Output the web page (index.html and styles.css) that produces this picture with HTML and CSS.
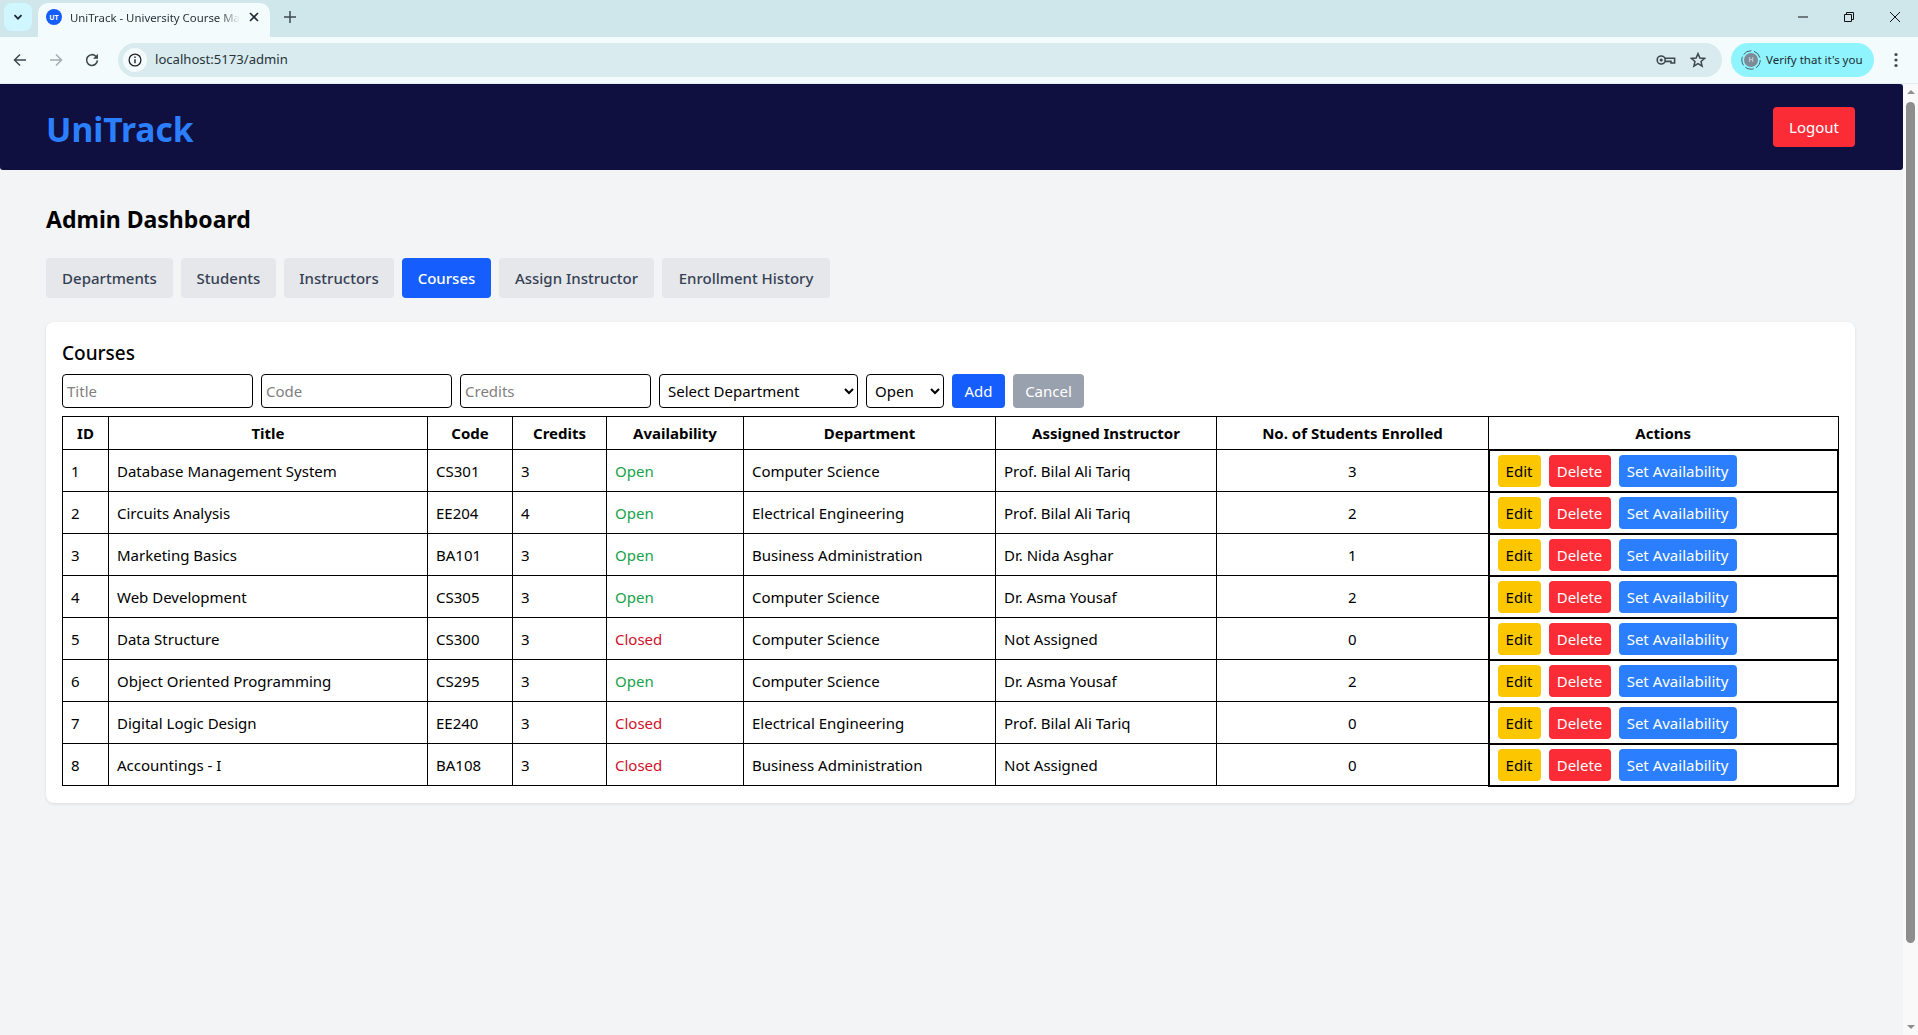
FILE: index.html
```html
<!DOCTYPE html>
<html lang="en">
<head>
    <meta charset="UTF-8">
    <meta name="viewport" content="width=device-width, initial-scale=1.0">
    <title>UniTrack - University Course Management</title>
    <link rel="stylesheet" href="styles.css">
</head>
<body>
<div class="browser-tabs">
    <div class="tab-search">
        <svg width="12" height="12" viewBox="0 0 12 12"><path d="M2.5 4.2 6 7.7l3.5-3.5" fill="none" stroke="#1c2b33" stroke-width="1.8"/></svg>
    </div>
    <div class="tab">
        <span class="favicon">UT</span>
        <span class="tab-title">UniTrack - University Course Ma</span>
        <svg class="tab-close" width="12" height="12" viewBox="0 0 12 12"><path d="M2 2l8 8M10 2l-8 8" stroke="#1f2a30" stroke-width="1.6"/></svg>
    </div>
    <svg class="new-tab" width="14" height="14" viewBox="0 0 14 14"><path d="M7 1v12M1 7h12" stroke="#3c4a50" stroke-width="1.5"/></svg>
    <div class="window-controls">
        <svg width="12" height="12" viewBox="0 0 12 12"><path d="M1 6h10" stroke="#111" stroke-width="1"/></svg>
        <svg width="12" height="12" viewBox="0 0 12 12"><path d="M1.5 3.5h7v7h-7zM3.5 3.5v-2h7v7h-2" fill="none" stroke="#111" stroke-width="1"/></svg>
        <svg width="12" height="12" viewBox="0 0 12 12"><path d="M1 1l10 10M11 1L1 11" stroke="#111" stroke-width="1"/></svg>
    </div>
</div>

<div class="browser-toolbar">
    <svg class="nav-icon" width="16" height="16" viewBox="0 0 16 16"><path d="M14 8H2.5M8 2.5 2.5 8 8 13.5" fill="none" stroke="#3c4a50" stroke-width="1.5"/></svg>
    <svg class="nav-icon" width="16" height="16" viewBox="0 0 16 16"><path d="M2 8h11.5M8 2.5 13.5 8 8 13.5" fill="none" stroke="#a3aeb2" stroke-width="1.5"/></svg>
    <svg class="nav-icon" width="16" height="16" viewBox="0 0 16 16"><path d="M13.4 8.4a5.4 5.4 0 1 1-1.6-4.2L13.4 6" fill="none" stroke="#3c4a50" stroke-width="1.6"/><path d="M14 1.8v5H9z" fill="#3c4a50"/></svg>
    <div class="omnibox">
        <span class="site-info">
            <svg width="14" height="14" viewBox="0 0 14 14"><circle cx="7" cy="7" r="5.9" fill="none" stroke="#222" stroke-width="1.3"/><path d="M7 6.2v4M7 3.6v1.4" stroke="#222" stroke-width="1.4"/></svg>
        </span>
        <span class="url">localhost:5173/admin</span>
        <svg class="omni-icon" width="20" height="14" viewBox="0 0 20 14"><circle cx="5.2" cy="7" r="4" fill="none" stroke="#3c4a50" stroke-width="1.6"/><circle cx="5.2" cy="7" r="1.6" fill="#3c4a50"/><path d="M9 5.2H18.6V10H15V8.4H9" fill="none" stroke="#3c4a50" stroke-width="1.6"/></svg>
        <svg class="omni-icon" width="16" height="16" viewBox="0 0 16 16"><path d="M8 1.6 9.9 6l4.7.4-3.6 3.1 1.1 4.6L8 11.6l-4.1 2.5L5 9.5 1.4 6.4 6.1 6z" fill="none" stroke="#3c4a50" stroke-width="1.5"/></svg>
    </div>
    <div class="verify-pill">
        <span class="avatar">
            <svg width="20" height="20" viewBox="0 0 20 20"><circle cx="10" cy="10" r="9.2" fill="none" stroke="#47606a" stroke-width="1" stroke-dasharray="9 2.5"/></svg>
            <span class="avatar-letter">H</span>
        </span>
        Verify that it's you
    </div>
    <svg class="menu-dots" width="4" height="16" viewBox="0 0 4 16"><circle cx="2" cy="2.5" r="1.6" fill="#3c4a50"/><circle cx="2" cy="8" r="1.6" fill="#3c4a50"/><circle cx="2" cy="13.5" r="1.6" fill="#3c4a50"/></svg>
</div>

<div class="viewport">
    <div class="page">
        <header class="topbar">
            <div class="logo">UniTrack</div>
            <button class="logout-btn">Logout</button>
        </header>

        <main class="content">
            <h1>Admin Dashboard</h1>

            <nav class="tabs">
                <button class="tab-btn tab-departments">Departments</button>
                <button class="tab-btn tab-students">Students</button>
                <button class="tab-btn tab-instructors">Instructors</button>
                <button class="tab-btn tab-courses active">Courses</button>
                <button class="tab-btn tab-assign">Assign Instructor</button>
                <button class="tab-btn tab-history">Enrollment History</button>
            </nav>

            <section class="card">
                <h2>Courses</h2>
                <div class="course-form">
                    <input class="field" type="text" placeholder="Title">
                    <input class="field" type="text" placeholder="Code">
                    <input class="field" type="text" placeholder="Credits">
                    <select class="select-dept">
                        <option>Select Department</option>
                    </select>
                    <select class="select-avail">
                        <option>Open</option>
                    </select>
                    <button class="btn btn-add">Add</button>
                    <button class="btn btn-cancel">Cancel</button>
                </div>

                <table class="courses">
                    <thead>
                        <tr>
                            <th class="col-id">ID</th>
                            <th class="col-title">Title</th>
                            <th class="col-code">Code</th>
                            <th class="col-credits">Credits</th>
                            <th class="col-avail">Availability</th>
                            <th class="col-dept">Department</th>
                            <th class="col-instructor">Assigned Instructor</th>
                            <th class="col-students">No. of Students Enrolled</th>
                            <th>Actions</th>
                        </tr>
                    </thead>
                    <tbody id="course-rows"></tbody>
                </table>
            </section>
        </main>
    </div>

    <div class="scrollbar">
        <span class="arrow-up"></span>
        <span class="thumb"></span>
        <span class="arrow-down"></span>
    </div>
</div>

<script>
    const courses = [
        [1, "Database Management System", "CS301", 3, "Open", "Computer Science", "Prof. Bilal Ali Tariq", 3],
        [2, "Circuits Analysis", "EE204", 4, "Open", "Electrical Engineering", "Prof. Bilal Ali Tariq", 2],
        [3, "Marketing Basics", "BA101", 3, "Open", "Business Administration", "Dr. Nida Asghar", 1],
        [4, "Web Development", "CS305", 3, "Open", "Computer Science", "Dr. Asma Yousaf", 2],
        [5, "Data Structure", "CS300", 3, "Closed", "Computer Science", "Not Assigned", 0],
        [6, "Object Oriented Programming", "CS295", 3, "Open", "Computer Science", "Dr. Asma Yousaf", 2],
        [7, "Digital Logic Design", "EE240", 3, "Closed", "Electrical Engineering", "Prof. Bilal Ali Tariq", 0],
        [8, "Accountings - I", "BA108", 3, "Closed", "Business Administration", "Not Assigned", 0]
    ];

    const rows = document.getElementById('course-rows');

    courses.forEach(c => {
        const row = document.createElement('tr');
        row.innerHTML = `
            <td>${c[0]}</td>
            <td>${c[1]}</td>
            <td>${c[2]}</td>
            <td>${c[3]}</td>
            <td class="${c[4] === 'Open' ? 'status-open' : 'status-closed'}">${c[4]}</td>
            <td>${c[5]}</td>
            <td>${c[6]}</td>
            <td class="count">${c[7]}</td>
            <td class="actions">
                <div class="action-group">
                    <button class="btn btn-edit">Edit</button>
                    <button class="btn btn-delete">Delete</button>
                    <button class="btn btn-set">Set Availability</button>
                </div>
            </td>`;
        rows.appendChild(row);
    });
</script>
</body>
</html>
```

FILE: styles.css
```css
* {
    margin: 0;
    padding: 0;
    box-sizing: border-box;
}

html, body {
    height: 100%;
    overflow: hidden;
}

body {
    font-family: "Noto Sans", "Open Sans", sans-serif;
    font-size: 15px;
    color: #000;
    background-color: #f3f4f6;
    display: flex;
    flex-direction: column;
}

button, input, select {
    font-family: inherit;
    font-size: 15px;
}

button {
    border: none;
    cursor: pointer;
}

/* Browser window */
.browser-tabs {
    height: 37px;
    flex-shrink: 0;
    background-color: #cfe6ea;
    display: flex;
    align-items: flex-end;
    padding-left: 4px;
}

.tab-search {
    width: 28px;
    height: 28px;
    align-self: flex-start;
    margin-top: 3px;
    background-color: #d0f7ff;
    border-radius: 8px;
    display: flex;
    align-items: center;
    justify-content: center;
}

.tab {
    width: 232px;
    height: 34px;
    flex-shrink: 0;
    margin-left: 6px;
    padding: 0 10px 6px 8px;
    background-color: #f4fbfc;
    border-radius: 10px 10px 0 0;
    display: flex;
    align-items: center;
    gap: 8px;
}

.favicon {
    width: 16px;
    height: 16px;
    flex-shrink: 0;
    border-radius: 50%;
    background-color: #155dfc;
    color: #fff;
    font-size: 7px;
    font-weight: 700;
    display: flex;
    align-items: center;
    justify-content: center;
}

.tab-title {
    flex: 1;
    min-width: 0;
    font-size: 11.4px;
    color: #26343a;
    white-space: nowrap;
    -webkit-mask-image: linear-gradient(to right, #000 88%, transparent);
    mask-image: linear-gradient(to right, #000 88%, transparent);
}

.tab-close {
    flex-shrink: 0;
}

.new-tab {
    margin: 0 0 13px 13px;
}

.window-controls {
    margin-left: auto;
    align-self: flex-start;
    margin-top: 11px;
    padding-right: 17px;
    display: flex;
    gap: 34px;
}

.browser-toolbar {
    height: 47px;
    flex-shrink: 0;
    background-color: #f4fbfc;
    border-bottom: 1px solid #e3ecee;
    display: flex;
    align-items: center;
    padding: 0 20px 1px 12px;
}

.nav-icon {
    margin-right: 20px;
}

.omnibox {
    width: 1604px;
    height: 34px;
    margin-left: -2px;
    background-color: #d9ebee;
    border-radius: 17px;
    display: flex;
    align-items: center;
    padding: 0 16px 0 5px;
}

.site-info {
    width: 24px;
    height: 24px;
    background-color: #f4fbfc;
    border-radius: 50%;
    display: flex;
    align-items: center;
    justify-content: center;
}

.url {
    flex: 1;
    margin-left: 8px;
    font-size: 13.1px;
    color: #26343a;
    padding-bottom: 1px;
}

.omni-icon {
    margin-left: 14px;
}

.verify-pill {
    width: 143px;
    height: 34px;
    margin-left: 9px;
    background-color: #90f4fe;
    border-radius: 17px;
    display: flex;
    align-items: center;
    gap: 5px;
    padding-left: 10px;
    font-size: 11.5px;
    color: #1c2b33;
    white-space: nowrap;
}

.avatar {
    position: relative;
    width: 20px;
    height: 20px;
    flex-shrink: 0;
}

.avatar-letter {
    position: absolute;
    inset: 3px;
    border-radius: 50%;
    background-color: #7d8b99;
    color: #dfe6ea;
    font-size: 7px;
    display: flex;
    align-items: center;
    justify-content: center;
}

.menu-dots {
    margin-left: 20px;
}

.viewport {
    flex: 1;
    min-height: 0;
    display: flex;
}

.page {
    flex: 1;
    min-width: 0;
}

.scrollbar {
    width: 15px;
    flex-shrink: 0;
    background-color: #f9f9f9;
    display: flex;
    flex-direction: column;
    align-items: center;
    padding-top: 6px;
}

.arrow-up {
    border-left: 4px solid transparent;
    border-right: 4px solid transparent;
    border-bottom: 4px solid #8d8d8d;
}

.thumb {
    width: 9px;
    height: 841px;
    margin-top: 8px;
    background-color: #8d8d8d;
    border-radius: 5px;
}

.arrow-down {
    margin-top: auto;
    margin-bottom: 6px;
    border-left: 4px solid transparent;
    border-right: 4px solid transparent;
    border-top: 4px solid #8d8d8d;
}

/* App */
.topbar {
    height: 86px;
    background-color: #0f0f40;
    border-radius: 0 3px 3px 3px;
    display: flex;
    align-items: center;
    justify-content: space-between;
    padding: 0 48px 0 46px;
}

.logo {
    font-size: 33.6px;
    font-weight: 700;
    color: #2b7fff;
    padding-top: 3px;
}

.logout-btn {
    width: 82px;
    height: 40px;
    background-color: #fb2c36;
    color: #fff;
    border-radius: 4px;
}

.content {
    padding: 33px 48px 0 46px;
}

h1 {
    font-size: 23px;
    font-weight: 700;
    line-height: 32px;
    margin-bottom: 23px;
}

.tabs {
    display: flex;
    gap: 8px;
    margin-bottom: 24px;
}

.tab-btn {
    height: 40px;
    background-color: #e5e7eb;
    color: #364153;
    font-weight: 500;
    border-radius: 4px;
}

.tab-departments { width: 127px; }
.tab-students { width: 95px; }
.tab-instructors { width: 110px; }
.tab-courses { width: 89px; }
.tab-assign { width: 155px; }
.tab-history { width: 168px; }

.tab-btn.active {
    background-color: #155dfc;
    color: #fff;
}

.card {
    background-color: #fff;
    padding: 16px;
    border-radius: 8px;
    box-shadow: 0 1px 3px rgba(0, 0, 0, 0.1);
}

h2 {
    font-size: 19px;
    font-weight: 500;
    line-height: 28px;
    margin: 1px 0 7px;
}

.course-form {
    display: flex;
    gap: 8px;
    margin-bottom: 8px;
}

.field, .select-dept, .select-avail {
    height: 34px;
    border: 1px solid #000;
    border-radius: 4px;
    background-color: #fff;
    color: #000;
}

.field {
    width: 191px;
    padding: 0 4px;
}

.field::placeholder {
    color: #808080;
}

.select-dept {
    width: 199px;
    padding-left: 4px;
}

.select-avail {
    width: 78px;
    padding-left: 4px;
}

.btn {
    height: 32px;
    padding: 0 8px;
    border-radius: 4px;
}

.btn-add {
    height: 34px;
    background-color: #155dfc;
    color: #fff;
    width: 53px;
}

.btn-cancel {
    height: 34px;
    background-color: #99a1af;
    color: #fff;
    width: 71px;
}

.courses {
    width: 1777px;
    table-layout: fixed;
    border-collapse: collapse;
}

.courses th, .courses td {
    border: 1px solid #000;
    text-align: left;
    padding: 0 8px;
    height: 42px;
    white-space: nowrap;
}

.courses th {
    height: 33px;
    text-align: center;
    font-weight: 700;
}

.col-id { width: 46px; }
.col-title { width: 319px; }
.col-code { width: 85px; }
.col-credits { width: 94px; }
.col-avail { width: 137px; }
.col-dept { width: 252px; }
.col-instructor { width: 221px; }
.col-students { width: 272px; }

.courses td.count {
    text-align: center;
}

.status-open {
    color: #16a34a;
}

.status-closed {
    color: #d0112b;
}

.courses td.actions {
    border: 2px solid #000;
}

.action-group {
    display: flex;
    gap: 8px;
}

.btn-edit {
    width: 43px;
    background-color: #fdc700;
    color: #000;
}

.btn-delete {
    width: 62px;
    background-color: #fb2c36;
    color: #fff;
}

.btn-set {
    width: 118px;
    background-color: #2b7fff;
    color: #fff;
    white-space: nowrap;
}
```
